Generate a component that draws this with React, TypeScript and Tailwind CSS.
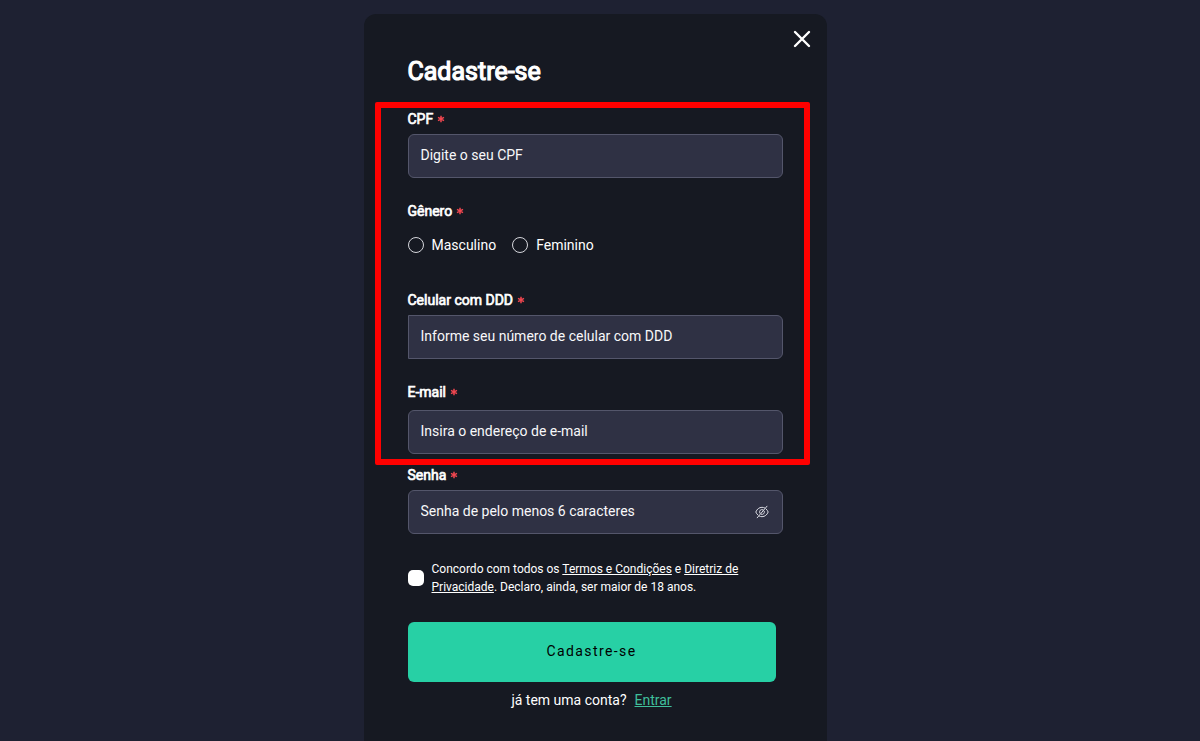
import { useState } from "react";
import type { ReactNode } from "react";

type FieldProps = {
  id: string;
  label: string;
  type?: string;
  placeholder: string;
  className?: string;
  inputClassName?: string;
  children?: ReactNode;
};

const Required = () => (
  <svg viewBox="0 0 8 8" className="h-2 w-2 text-[#f0464f]" aria-hidden="true">
    <path
      d="M4 .8v6.4M1 2.4l6 3.2M7 2.4L1 5.6"
      stroke="currentColor"
      strokeWidth="1.5"
      fill="none"
    />
  </svg>
);

const labelClass =
  "flex items-center gap-1 text-sm leading-[18px] [-webkit-text-stroke:0.7px_currentColor]";

const Field = ({
  id,
  label,
  type = "text",
  placeholder,
  className = "gap-1.5",
  inputClassName = "rounded-md",
  children,
}: FieldProps) => (
  <div className={`flex flex-col ${className}`}>
    <label htmlFor={id} className={labelClass}>
      {label}
      <Required />
    </label>
    <div className="relative">
      <input
        id={id}
        type={type}
        placeholder={placeholder}
        className={`block h-11 w-full border border-[#54566b] bg-[#2f3144] px-3 pb-0.5 text-sm text-white outline-none placeholder:text-[#f8f8fa] ${inputClassName}`}
      />
      {children}
    </div>
  </div>
);

const EyeOff = () => (
  <svg
    viewBox="0 0 14 14"
    className="h-3.5 w-3.5"
    fill="none"
    stroke="currentColor"
    strokeWidth="1"
    strokeLinecap="round"
    aria-hidden="true"
  >
    <path d="M9.6 2.9C8.800 2.500 7.900 2.300 7 2.300 4.200 2.300 1.900 4.200.8 7c.5 1.300 1.300 2.400 2.300 3.200" />
    <path d="M11 3.900c.9.800 1.700 1.900 2.200 3.100-1.100 2.800-3.400 4.700-6.200 4.700-.9 0-1.700-.2-2.500-.5" />
    <path d="M8.200 4.900A2.400 2.400 0 0 0 4.900 8.200M9.300 6.300a2.400 2.400 0 0 1-3 3" />
    <path d="M12 1.200L2.200 12.800" />
  </svg>
);

const App = () => {
  const [showPassword, setShowPassword] = useState(false);

  return (
    <main className="flex min-h-screen justify-center bg-[#1e2132] pt-3.5 pr-2.5 font-['Roboto',sans-serif] text-white">
      <section className="relative w-full max-w-[463px] rounded-t-xl bg-[#161922] px-11 pt-[42px] pb-8">
        <button
          type="button"
          aria-label="Fechar"
          className="absolute top-4 right-4 p-px cursor-pointer"
        >
          <svg
            viewBox="0 0 16 16"
            className="h-4 w-4 overflow-visible"
            stroke="currentColor"
            strokeWidth="2.4"
            strokeLinecap="round"
            aria-hidden="true"
          >
            <path d="M1 1l14 14M15 1L1 15" />
          </svg>
        </button>

        <h1 className="text-[25px] leading-8 [-webkit-text-stroke:1.2px_currentColor]">
          Cadastre-se
        </h1>

        <form className="mt-[22px]" onSubmit={(e) => e.preventDefault()}>
          <div className="relative">
            <Field id="cpf" label="CPF" placeholder="Digite o seu CPF" />

            <fieldset className="mt-6">
              <legend className={labelClass}>
                Gênero
                <Required />
              </legend>
              <div className="mt-4 flex gap-4 text-sm leading-[18px]">
                <label className="flex items-center gap-2">
                  <input
                    type="radio"
                    name="genero"
                    value="masculino"
                    className="h-4 w-4 appearance-none rounded-full border border-[#d5d6dc] checked:bg-[#27d0a5]"
                  />
                  Masculino
                </label>
                <label className="flex items-center gap-2">
                  <input
                    type="radio"
                    name="genero"
                    value="feminino"
                    className="h-4 w-4 appearance-none rounded-full border border-[#d5d6dc] checked:bg-[#27d0a5]"
                  />
                  Feminino
                </label>
              </div>
            </fieldset>

            <Field
              id="celular"
              label="Celular com DDD"
              type="tel"
              placeholder="Informe seu número de celular com DDD"
              className="mt-[37px] gap-1.5"
              inputClassName="rounded-r-md"
            />
            <Field
              id="email"
              label="E-mail"
              type="email"
              placeholder="Insira o endereço de e-mail"
              className="mt-6 gap-[9px]"
            />

            {/* highlight around the required data */}
            <div className="pointer-events-none absolute -top-2 -right-[27px] -bottom-[11px] -left-[33px] rounded-xs border-6 border-[#ff0000]" />
          </div>

          <Field
            id="senha"
            label="Senha"
            type={showPassword ? "text" : "password"}
            placeholder="Senha de pelo menos 6 caracteres"
            className="mt-3 gap-1.5"
          >
            <button
              type="button"
              aria-label="Mostrar senha"
              onClick={() => setShowPassword(!showPassword)}
              className="absolute inset-y-0 right-3.5 flex items-center text-[#d9dae2] cursor-pointer"
            >
              <EyeOff />
            </button>
          </Field>

          <div className="mt-[26px] flex items-center gap-2">
            <input
              id="termos"
              type="checkbox"
              className="h-4 w-4 shrink-0 appearance-none rounded-[5px] bg-white checked:bg-[#27d0a5]"
            />
            <label htmlFor="termos" className="pr-8 text-xs leading-[18px]">
              Concordo com todos os{" "}
              <a href="#termos" className="underline underline-offset-1">
                Termos e Condições
              </a>{" "}
              e{" "}
              <a href="#privacidade" className="underline underline-offset-1">
                Diretriz de Privacidade
              </a>
              . Declaro, ainda, ser maior de 18 anos.
            </label>
          </div>

          <div className="mt-[26px] pr-[7px]">
            <button
              type="submit"
              className="h-15 w-full rounded-md bg-[#27d0a5] pb-0.5 text-sm tracking-widest text-black cursor-pointer"
            >
              Cadastre-se
            </button>
            <p className="mt-[9px] flex justify-center gap-2 text-sm leading-[18px]">
              já tem uma conta?
              <a href="#entrar" className="text-[#3fbf9b] underline">
                Entrar
              </a>
            </p>
          </div>
        </form>
      </section>
    </main>
  );
};

export default App;
